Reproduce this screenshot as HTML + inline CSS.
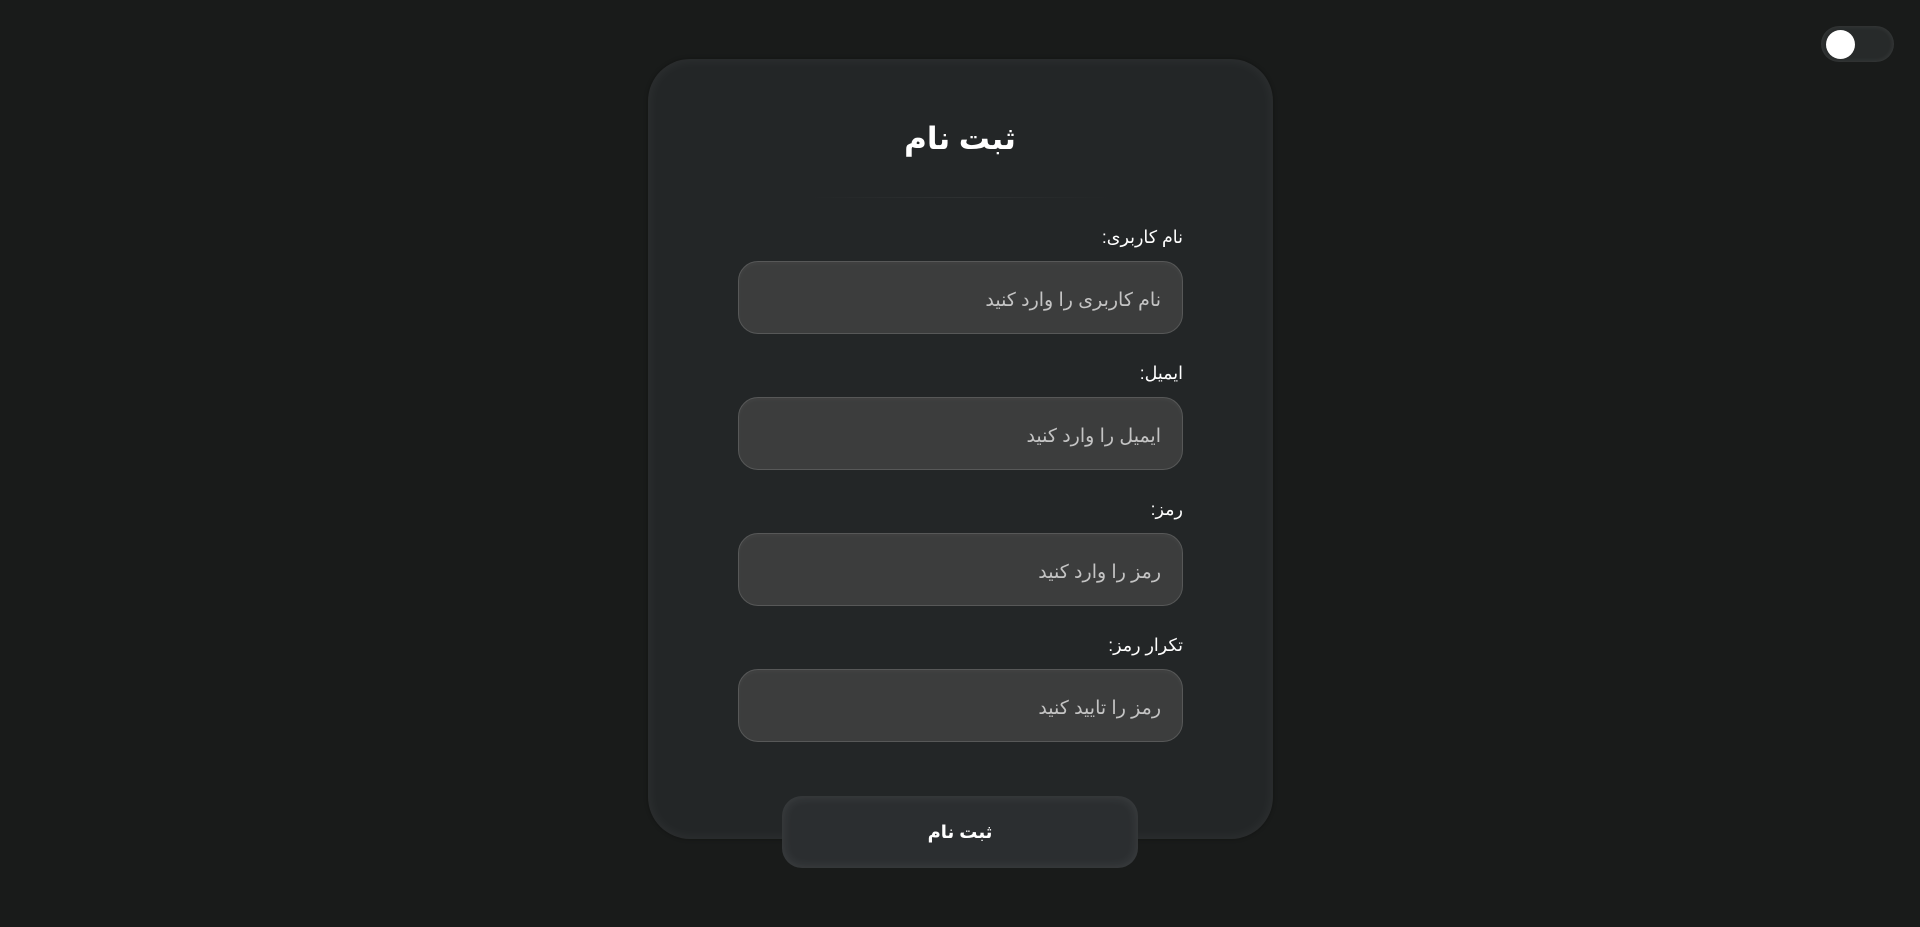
<!DOCTYPE html>
<html lang="fa" dir="rtl"><head><meta charset="utf-8">
<style>
html,body{margin:0;width:1920px;height:927px;background:#191b1a;overflow:hidden;font-family:"Liberation Sans","DejaVu Sans",sans-serif;color:#fff}
.card{position:absolute;left:648px;top:59px;width:625px;height:780px;border-radius:42px;background:#232627;box-shadow:inset 0 0 14px rgba(255,255,255,0.06),0 0 4px rgba(0,0,0,.3)}
h1{position:absolute;left:0;top:114px;margin:0;text-align:center;font-size:31px;font-weight:bold;line-height:50px}
.line{position:absolute;left:810px;width:300px;top:197px;height:1px;background:linear-gradient(90deg,transparent,#2d3031,transparent)}
.lab{position:absolute;right:737px;font-size:17.5px;line-height:24px}
.inp{position:absolute;left:738px;width:443px;height:71px;border:1px solid #575858;border-radius:20px;background:#3c3d3d;box-shadow:inset 0 2px 4px rgba(255,255,255,0.03)}
.inp span{position:absolute;right:21px;top:3px;line-height:71px;font-size:19px;color:#c4c4c4}
.btn{position:absolute;left:782px;top:796px;width:356px;height:72px;border-radius:20px;background:#2b2e30;box-shadow:inset 0 0 12px rgba(255,255,255,0.1);text-align:center;line-height:72px;font-size:18px;font-weight:bold}
.tog{position:absolute;left:1821px;top:26px;width:73px;height:36px;border-radius:18px;background:#272a2a;box-shadow:inset 0 0 6px rgba(255,255,255,.1)}
.tog i{position:absolute;left:5px;top:4px;width:29px;height:29px;border-radius:50%;background:#fff}
</style></head><body>
<div class="tog"><i></i></div>
<div class="card"></div>
<h1 style="width:1920px">ثبت نام</h1>
<div class="line"></div>
<div class="lab" style="top:225px">نام کاربری:</div>
<div class="inp" style="top:261px"><span>نام کاربری را وارد کنید</span></div>
<div class="lab" style="top:361px">ایمیل:</div>
<div class="inp" style="top:397px"><span>ایمیل را وارد کنید</span></div>
<div class="lab" style="top:497px">رمز:</div>
<div class="inp" style="top:533px"><span>رمز را وارد کنید</span></div>
<div class="lab" style="top:633px">تکرار رمز:</div>
<div class="inp" style="top:669px"><span>رمز را تایید کنید</span></div>
<div class="btn">ثبت نام</div>
</body></html>
